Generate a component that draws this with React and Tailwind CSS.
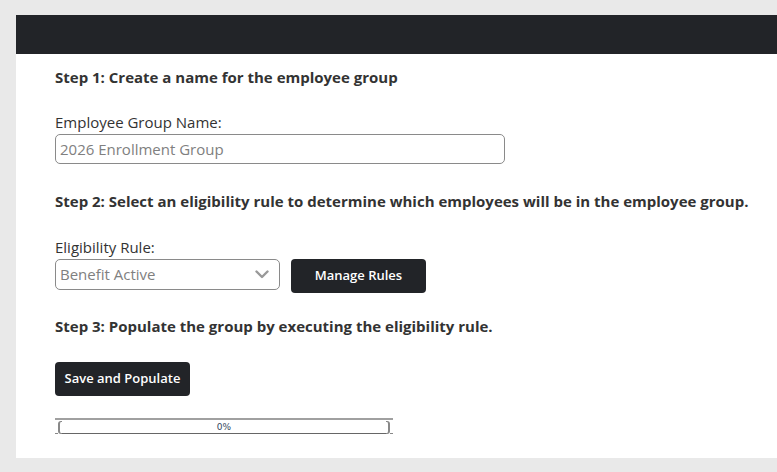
import React from 'react';

const font = { fontFamily: '"Open Sans", sans-serif' };

const Step = ({ children, className = '' }) => (
  <p className={`text-[15px] font-bold text-[#333] leading-[20px] ${className}`}>{children}</p>
);

const Bracket = ({ side }) => (
  <div
    className={`w-[4px] h-[13px] border-t border-b border-[#888] ${
      side === 'left' ? 'border-l-2 rounded-l-[3px]' : 'border-r-2 rounded-r-[3px]'
    }`}
  />
);

const ProgressBar = () => (
  <div className="w-[338px] border-t-2 border-[#a0a0a0] pt-[1px]">
    <div className="flex items-end">
      <div className="w-[3px] h-[1px] bg-[#888]" />
      <Bracket side="left" />
      <div
        className="flex-1 border-b border-[#666] text-center text-[9px] leading-[12px] text-[#34495e]"
        style={{ fontFamily: '"DejaVu Sans", sans-serif' }}
      >
        0%
      </div>
      <Bracket side="right" />
      <div className="w-[3px] h-[1px] bg-[#888]" />
    </div>
  </div>
);

const DarkButton = ({ children, className = '' }) => (
  <button
    className={`w-[135px] h-[34px] rounded-[4px] bg-[#222428] text-white text-[13px] font-semibold ${className}`}
    style={font}
  >
    {children}
  </button>
);

export default function App() {
  return (
    <div className="min-h-screen bg-[#e9e9e9] pt-[15px] pl-[16px]" style={font}>
      <div className="h-[39px] bg-[#222428]" />
      <div className="bg-white pl-[39px] pt-[13px] pb-[24px]">
        <Step>Step 1: Create a name for the employee group</Step>

        <label className="block mt-[25px] text-[15px] leading-[20px] text-[#333]">Employee Group Name:</label>
        <input
          className="block mt-[2px] w-[450px] h-[30px] border border-[#8a8a8a] rounded-[5px] px-[4px] text-[15px] text-[#333] placeholder:text-[#808080] outline-none"
          placeholder="2026 Enrollment Group"
          style={font}
        />

        <Step className="mt-[27px]">Step 2: Select an eligibility rule to determine which employees will be in the employee group.</Step>

        <label className="block mt-[26px] text-[15px] leading-[20px] text-[#333]">Eligibility Rule:</label>
        <div className="flex items-start gap-[11px] mt-[2px]">
          <div className="flex items-center justify-between w-[225px] h-[31px] border border-[#8a8a8a] rounded-[5px] pl-[4px] pr-[10px]">
            <span className="text-[15px] text-[#808080]">Benefit Active</span>
            <svg width="14" height="9" viewBox="0 0 14 9" fill="none">
              <path d="M1.5 1.5 L7 7 L12.5 1.5" stroke="#999" strokeWidth="2.4" strokeLinecap="round" strokeLinejoin="round" />
            </svg>
          </div>
          <DarkButton>Manage Rules</DarkButton>
        </div>

        <Step className="mt-[23px]">Step 3: Populate the group by executing the eligibility rule.</Step>

        <DarkButton className="block mt-[26px]">Save and Populate</DarkButton>

        <div className="mt-[22px]">
          <ProgressBar />
        </div>
      </div>
    </div>
  );
}
